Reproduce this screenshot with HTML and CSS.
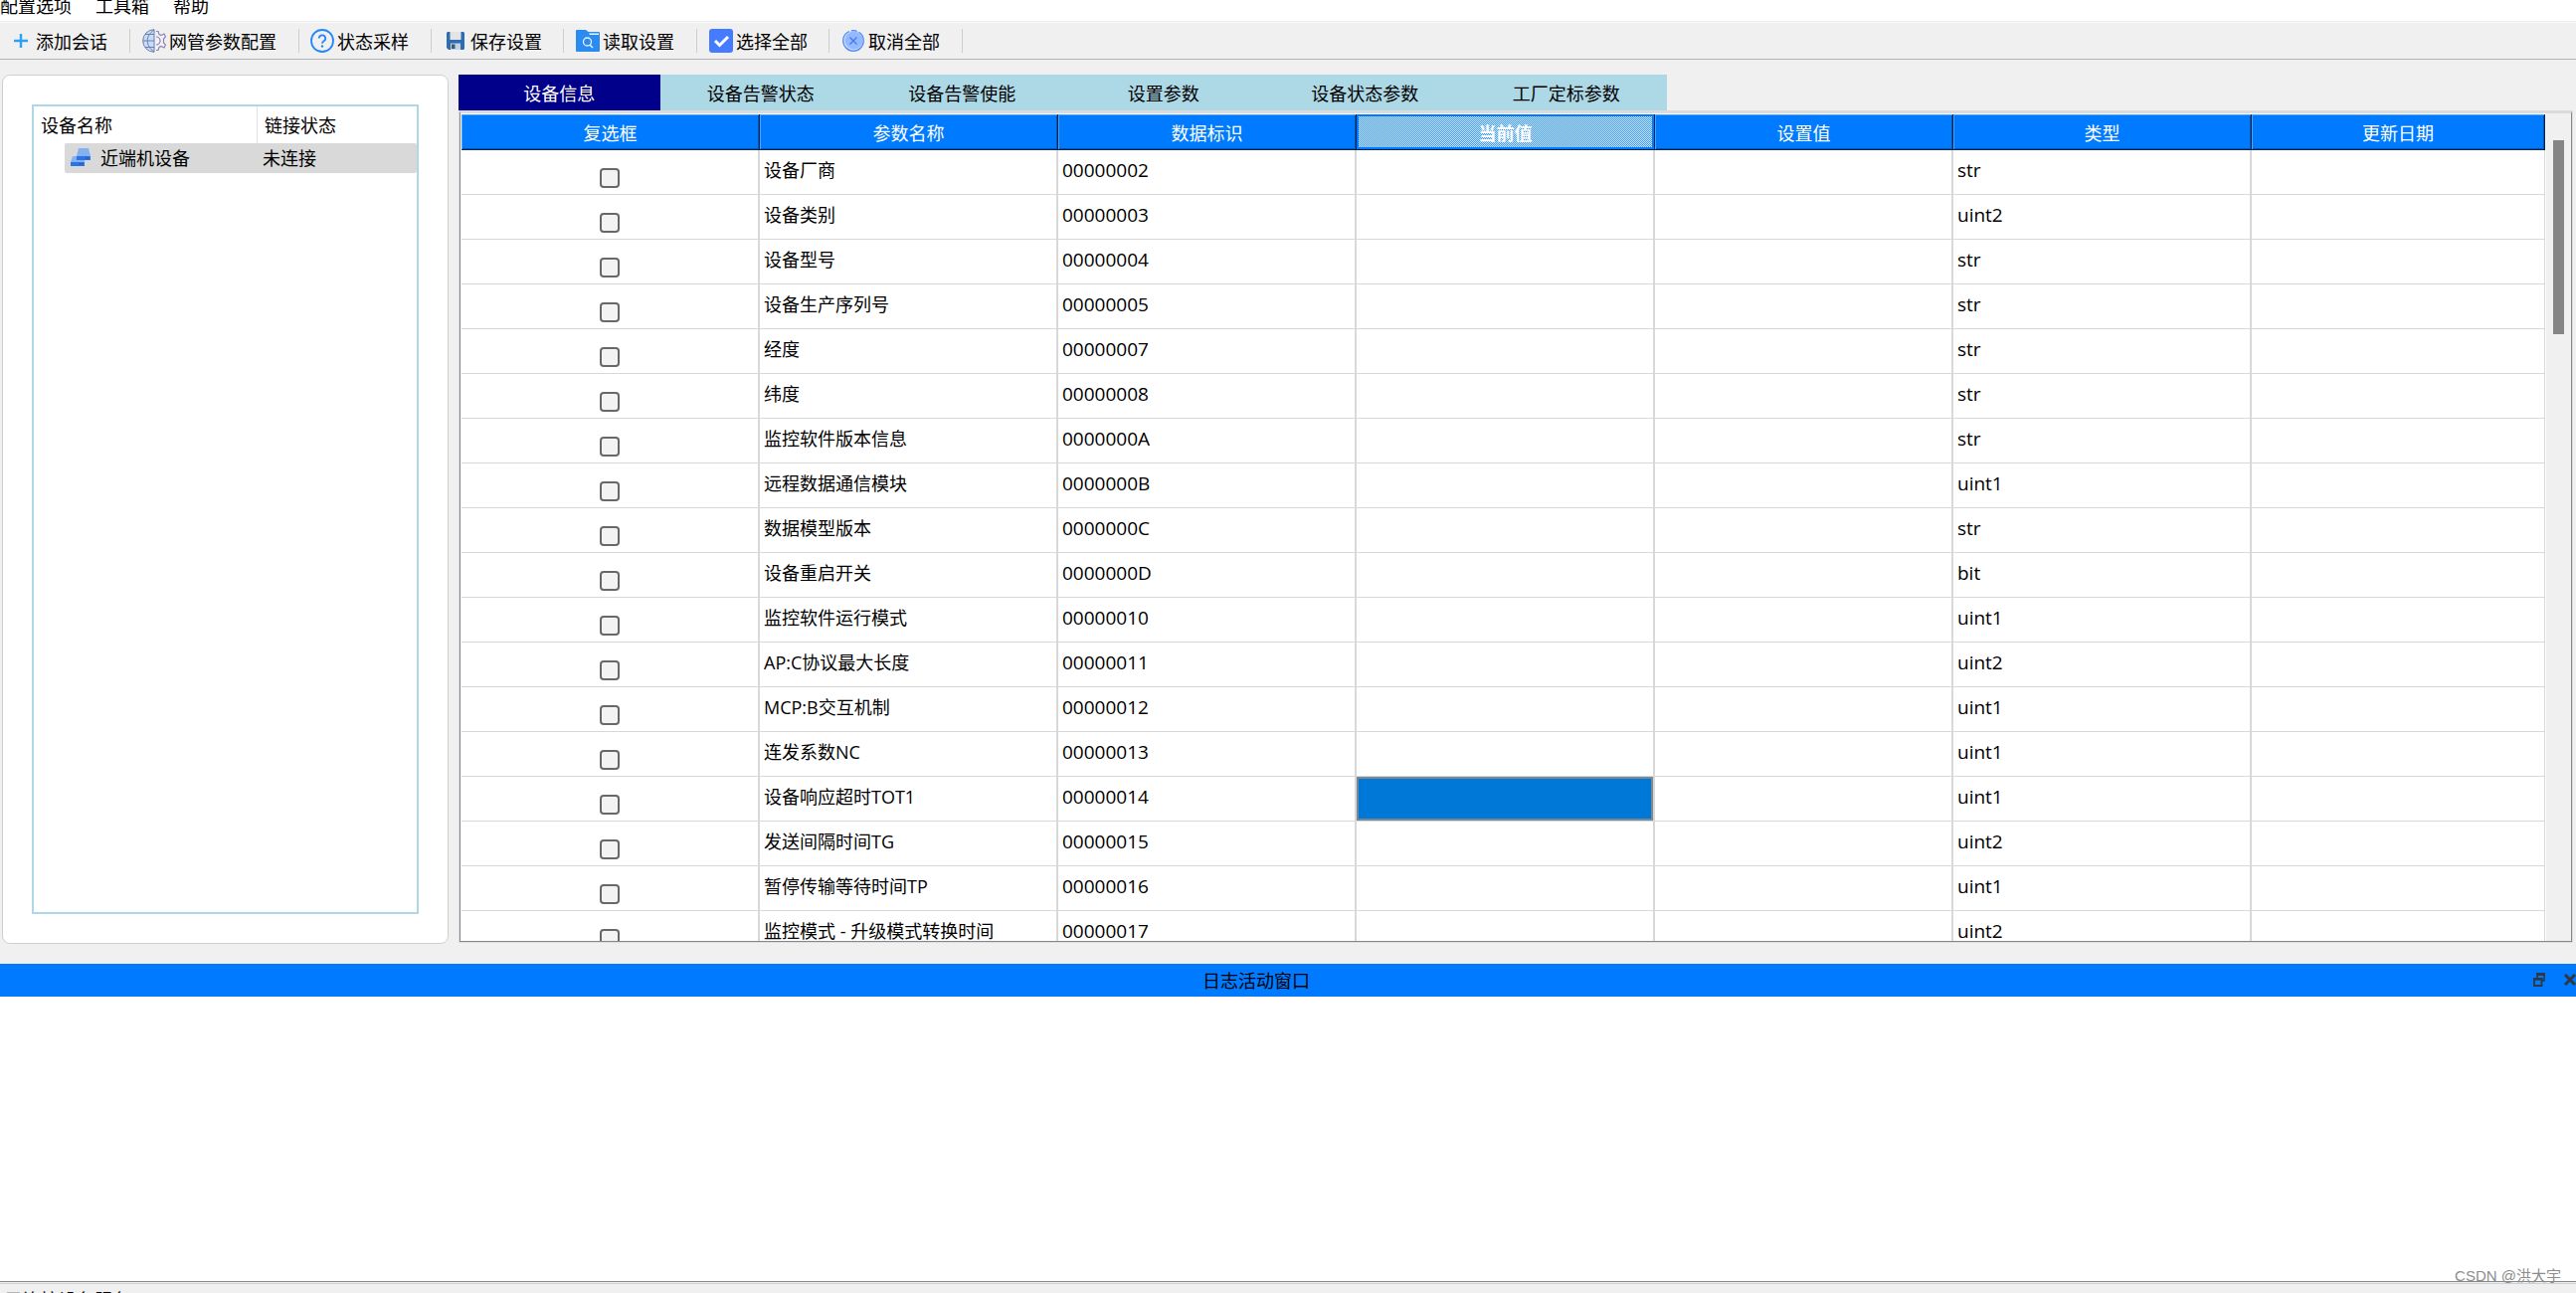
FILE: index.html
```html
<!DOCTYPE html>
<html lang="zh-CN">
<head>
<meta charset="utf-8">
<title>网管配置</title>
<link rel="stylesheet" href="styles.css">
</head>
<body>
<nav class="menubar">
  <button class="menu">配置选项</button>
  <button class="menu">工具箱</button>
  <button class="menu">帮助</button>
</nav>
<div class="toolbar">
  <button class="tool tool-add"><svg width="14" height="16" viewBox="0 0 14 16"><path d="M7 1v14M0 8h14" stroke="#2ba3f5" stroke-width="2.400" fill="none"/></svg>添加会话</button>
  <button class="tool tool-net"><svg width="24" height="24" viewBox="0 0 24 24"><path d="M12 0.700A11.300 11.300 0 0 0 12 23.300z" fill="#c7dcfa" stroke="#6e7ea8"/><path d="M12 1C3 7 3 17 12 23M1 12h11M3 5.500h9M3 18.500h9" stroke="#6e7ea8" fill="none"/><path d="M14 2.500h2l1 3 2 1 3-1.500 1.500 3-2 2v4l2 2-1.500 3-3-1.500-2 1-1 3h-2M14 8a4 4 0 0 1 0 8" stroke="#8c87a8" stroke-width="1.200" fill="#f4efff"/></svg>网管参数配置</button>
  <button class="tool tool-help"><svg width="24" height="24" viewBox="0 0 24 24"><circle cx="12" cy="12" r="11" fill="none" stroke="#2387fb" stroke-width="1.800"/><path d="M8.800 9.500a3.200 3.200 0 1 1 4.600 2.900c-1 .6-1.400 1-1.400 2.400" fill="none" stroke="#2387fb" stroke-width="1.800"/><circle cx="12" cy="17.500" r="1.200" fill="#2387fb"/></svg>状态采样</button>
  <button class="tool tool-save"><svg width="18" height="18" viewBox="0 0 18 18"><path d="M1 0h16l1 1v16l-1 1H2l-2-2V1z" fill="#2e6db4"/><path d="M3.500 0h11v8h-11z" fill="#e4e4e4"/><path d="M4 11.500h10V18H4z" fill="#c3d2df"/><path d="M5 12.500h3.500V17H5z" fill="#3b5b75"/></svg>保存设置</button>
  <button class="tool tool-read"><svg width="24" height="22" viewBox="0 0 24 22"><path d="M1 0h9l2.500 2H23q1 0 1 1v18q0 1-1 1H1q-1 0-1-1V1q0-1 1-1z" fill="#2a8cf0"/><path d="M13 3.500h10v1.500H14z" fill="#eef6ff"/><circle cx="11.500" cy="12" r="4" fill="none" stroke="#e8f3ff" stroke-width="1.300"/><path d="M14 15l3 3" stroke="#e8f3ff" stroke-width="1.500"/></svg>读取设置</button>
  <button class="tool tool-all"><svg width="24" height="24" viewBox="0 0 24 24"><rect width="24" height="24" rx="3" fill="#457bff"/><path d="M6 12l4.500 4.500L19 8" fill="none" stroke="#fff" stroke-width="3"/></svg>选择全部</button>
  <button class="tool tool-none"><svg width="22" height="22" viewBox="0 0 22 22"><circle cx="11" cy="11" r="10.300" fill="#c5daff" stroke="#5187f7" stroke-width="1.200" stroke-dasharray="44 2 6 2"/><circle cx="11.500" cy="10.500" r="9" fill="#93b9ff"/><path d="M7.500 7.500l7 7M14.500 7.500l-7 7" stroke="#4177ee" stroke-width="1.200"/></svg>取消全部</button>
</div>
<main class="workspace">
  <section class="side">
    <div class="tree">
      <div class="tree-head"><span>设备名称</span><span>链接状态</span></div>
      <div class="tree-row"><span class="device"><svg width="20" height="18" viewBox="0 0 20 18"><path d="M8 0h10l2 8v4H6V8z" fill="#84b2f0"/><path d="M6 8h14v4H6z" fill="#2d73e8"/><path d="M2 8h4v4h8v2H0z" fill="#84b2f0"/><path d="M0 14h14v4H0z" fill="#2d73e8"/><path d="M15 10h1M17 10h1M9 16h1M11 16h1" stroke="#123f86" stroke-width="1"/></svg>近端机设备</span><span>未连接</span></div>
    </div>
  </section>
  <section class="content">
    <div class="tabs" role="tablist">
      <button class="tab active" role="tab">设备信息</button>
      <button class="tab" role="tab">设备告警状态</button>
      <button class="tab" role="tab">设备告警使能</button>
      <button class="tab" role="tab">设置参数</button>
      <button class="tab" role="tab">设备状态参数</button>
      <button class="tab" role="tab">工厂定标参数</button>
    </div>
    <div class="frame">
      <div class="scroller">
        <table class="grid">
          <thead><tr><th>复选框</th><th>参数名称</th><th>数据标识</th><th class="current">当前值</th><th>设置值</th><th>类型</th><th class="date">更新日期</th></tr></thead>
          <tbody>
            <tr><td><input type="checkbox" aria-label="设备厂商"></td><td>设备厂商</td><td class="num">00000002</td><td></td><td></td><td class="num">str</td><td></td></tr>
            <tr><td><input type="checkbox" aria-label="设备类别"></td><td>设备类别</td><td class="num">00000003</td><td></td><td></td><td class="num">uint2</td><td></td></tr>
            <tr><td><input type="checkbox" aria-label="设备型号"></td><td>设备型号</td><td class="num">00000004</td><td></td><td></td><td class="num">str</td><td></td></tr>
            <tr><td><input type="checkbox" aria-label="设备生产序列号"></td><td>设备生产序列号</td><td class="num">00000005</td><td></td><td></td><td class="num">str</td><td></td></tr>
            <tr><td><input type="checkbox" aria-label="经度"></td><td>经度</td><td class="num">00000007</td><td></td><td></td><td class="num">str</td><td></td></tr>
            <tr><td><input type="checkbox" aria-label="纬度"></td><td>纬度</td><td class="num">00000008</td><td></td><td></td><td class="num">str</td><td></td></tr>
            <tr><td><input type="checkbox" aria-label="监控软件版本信息"></td><td>监控软件版本信息</td><td class="num">0000000A</td><td></td><td></td><td class="num">str</td><td></td></tr>
            <tr><td><input type="checkbox" aria-label="远程数据通信模块"></td><td>远程数据通信模块</td><td class="num">0000000B</td><td></td><td></td><td class="num">uint1</td><td></td></tr>
            <tr><td><input type="checkbox" aria-label="数据模型版本"></td><td>数据模型版本</td><td class="num">0000000C</td><td></td><td></td><td class="num">str</td><td></td></tr>
            <tr><td><input type="checkbox" aria-label="设备重启开关"></td><td>设备重启开关</td><td class="num">0000000D</td><td></td><td></td><td class="num">bit</td><td></td></tr>
            <tr><td><input type="checkbox" aria-label="监控软件运行模式"></td><td>监控软件运行模式</td><td class="num">00000010</td><td></td><td></td><td class="num">uint1</td><td></td></tr>
            <tr><td><input type="checkbox" aria-label="AP:C协议最大长度"></td><td>AP:C协议最大长度</td><td class="num">00000011</td><td></td><td></td><td class="num">uint2</td><td></td></tr>
            <tr><td><input type="checkbox" aria-label="MCP:B交互机制"></td><td>MCP:B交互机制</td><td class="num">00000012</td><td></td><td></td><td class="num">uint1</td><td></td></tr>
            <tr><td><input type="checkbox" aria-label="连发系数NC"></td><td>连发系数NC</td><td class="num">00000013</td><td></td><td></td><td class="num">uint1</td><td></td></tr>
            <tr><td><input type="checkbox" aria-label="设备响应超时TOT1"></td><td>设备响应超时TOT1</td><td class="num">00000014</td><td class="picked"></td><td></td><td class="num">uint1</td><td></td></tr>
            <tr><td><input type="checkbox" aria-label="发送间隔时间TG"></td><td>发送间隔时间TG</td><td class="num">00000015</td><td></td><td></td><td class="num">uint2</td><td></td></tr>
            <tr><td><input type="checkbox" aria-label="暂停传输等待时间TP"></td><td>暂停传输等待时间TP</td><td class="num">00000016</td><td></td><td></td><td class="num">uint1</td><td></td></tr>
            <tr><td><input type="checkbox" aria-label="监控模式 - 升级模式转换时间"></td><td>监控模式 - 升级模式转换时间</td><td class="num">00000017</td><td></td><td></td><td class="num">uint2</td><td></td></tr>
          </tbody>
        </table>
      </div>
      <div class="scrollbar"><div class="thumb"></div></div>
    </div>
  </section>
</main>
<section class="dock">
  <header class="dock-title">
    <h2>日志活动窗口</h2>
    <button aria-label="浮动"><svg width="12" height="14" viewBox="0 0 12 14"><path d="M4 5V1h7v7H9" fill="none" stroke="#2f3740" stroke-width="1.600"/><path d="M3 1.500h9" stroke="#2f3740" stroke-width="3"/><path d="M1 6h7.500v7H1z" fill="none" stroke="#2f3740" stroke-width="1.800"/><path d="M0 6.500h9.500" stroke="#2f3740" stroke-width="2.400"/></svg></button>
    <button aria-label="关闭"><svg width="12" height="12" viewBox="0 0 12 12"><path d="M1 1l10 10M11 1L1 11" stroke="#2f3740" stroke-width="3"/></svg></button>
  </header>
  <div class="log"></div>
</section>
<footer class="status">已连接设备服务</footer>
<div class="watermark">CSDN @洪大宇</div>
</body>
</html>
```
FILE: styles.css
```css
* { box-sizing: border-box; }
body {
  margin: 0;
  height: 100vh;
  overflow: hidden;
  display: flex;
  flex-direction: column;
  background: #f0f0f0;
  color: #000;
  font: 400 18px/24px "Noto Sans CJK SC", sans-serif;
}
button { border: 0; padding: 0; background: none; color: inherit; font: inherit; white-space: nowrap; }
svg { display: block; flex: none; }

.menubar {
  flex: none;
  display: flex;
  align-items: flex-end;
  gap: 24px;
  height: 22px;
  padding-bottom: 4px;
  background: #fff;
  border-bottom: 1px solid #ececec;
}
.menu { height: 24px; }

.toolbar {
  flex: none;
  display: flex;
  align-items: center;
  height: 38px;
  border-top: 1px solid #fafafa;
  border-bottom: 1px solid #b4b4b4;
}
.tool { display: flex; align-items: center; height: 24px; gap: 3px; line-height: 22px; border-right: 1px solid #cdcdcd; }
.tool-add { width: 131px; padding-left: 14px; gap: 8px; }
.tool-net { width: 170px; padding-left: 12px; }
.tool-help { width: 133px; padding-left: 11px; }
.tool-save { width: 133px; padding-left: 15px; gap: 6px; }
.tool-read { width: 134px; padding-left: 12px; }
.tool-all { width: 133px; padding-left: 12px; }
.tool-none { width: 134px; padding-left: 13px; gap: 4px; }

.workspace { flex: none; height: 909px; display: flex; gap: 11px; padding: 15px 4px 20px 2px; }
.side {
  flex: none;
  width: 449px;
  padding: 29px;
  background: #fff;
  border: 1px solid #cfcfcf;
  border-radius: 8px;
}
.tree { height: 100%; border: 2px solid #add8e6; }
.tree-head, .tree-row { display: grid; grid-template-columns: 225px 1fr; align-items: center; }
.tree-head { height: 37px; }
.tree-head span { height: 37px; line-height: 36px; padding-left: 7px; }
.tree-head span:first-child { border-right: 1px solid #e2e2e2; }
.tree-row { height: 30px; margin-left: 31px; padding-bottom: 2px; background: #d9d9d9; grid-template-columns: 199px 1fr; border-radius: 2px; }
.device { display: flex; align-items: center; gap: 10px; padding-left: 6px; }

.content { flex: 1; min-width: 0; display: flex; flex-direction: column; }
.tabs { flex: none; width: 1215px; height: 37px; margin-left: -1px; display: grid; grid-template-columns: repeat(6, 1fr); }
.tab { background: #add8e6; padding-bottom: 2px; }
.tab.active { background: #00008b; color: #fff; }
.frame { flex: 1; min-height: 0; display: flex; margin-bottom: 2px; border: 1px solid #828790; border-top: 2px solid #dadada; outline: 1px solid #dcdcdc; background: #fff; }
.scroller { flex: 1; min-width: 0; overflow: hidden; padding: 1px 1px 0 1px; }
.scrollbar { flex: none; width: 25px; background: #f0f0f0; padding-top: 27px; }
.thumb { width: 11px; height: 195px; margin-left: 7px; background: #858585; }

.grid { width: 100%; border-collapse: separate; border-spacing: 0; table-layout: fixed; }
.grid th {
  width: 300px;
  height: 36px;
  padding: 0;
  color: #fff;
  font-weight: 400;
  background: #007bff;
  border: 1px solid #00264f;
  border-width: 0 1px 1px 0;
  box-shadow: inset 1px 1px #4da3ff, inset -1px -1px #0056b3;
}
.grid th.date { width: auto; }
.grid th.current {
  font-weight: 700;
  background: repeating-conic-gradient(#3395ff 0 25%, #d9ecff 0 50%) 0 0 / 2px 2px;
  box-shadow: inset 0 0 0 2px #007bff;
}
.grid td {
  height: 45px;
  padding: 8px 4px 12px;
  font-family: "Open Sans", "Noto Sans CJK SC", sans-serif;
  line-height: 24px;
  border-right: 2px solid #d8d8d8;
  border-bottom: 1px solid #d8d8d8;
  white-space: nowrap;
}
.grid td:last-child { border-right-width: 1px; }
.grid td:first-child { padding: 18px 0 6px; }
.grid td.num { font-size: 19px; }
.grid td.picked { background: #0078d7; box-shadow: inset 0 0 0 2px #7a8894; }
.grid input {
  appearance: none;
  display: block;
  width: 20px;
  height: 20px;
  margin: 0 auto;
  background: #f3f3f3;
  border: 2px solid #686868;
  border-radius: 4px;
}

.dock { flex: 1; min-height: 0; display: flex; flex-direction: column; }
.dock-title { flex: none; height: 33px; display: flex; align-items: center; gap: 19px; padding-bottom: 1px; background: #007bff; }
.dock-title h2 { flex: 1; margin: 0; padding: 0 2px 1px 0; font: inherit; text-align: center; }
.log { flex: 1; background: #fff; border-bottom: 1px solid #828790; }
.status { flex: none; height: 11px; padding: 4px 5px 0; overflow: hidden; border-top: 1px solid #f0f0f0; box-shadow: inset 0 1px #d0d0d0; }
.watermark { position: absolute; right: 15px; bottom: 5px; font-family: "Liberation Sans", "Noto Sans CJK SC", sans-serif; font-size: 15px; color: #8c8c8c; }
```
